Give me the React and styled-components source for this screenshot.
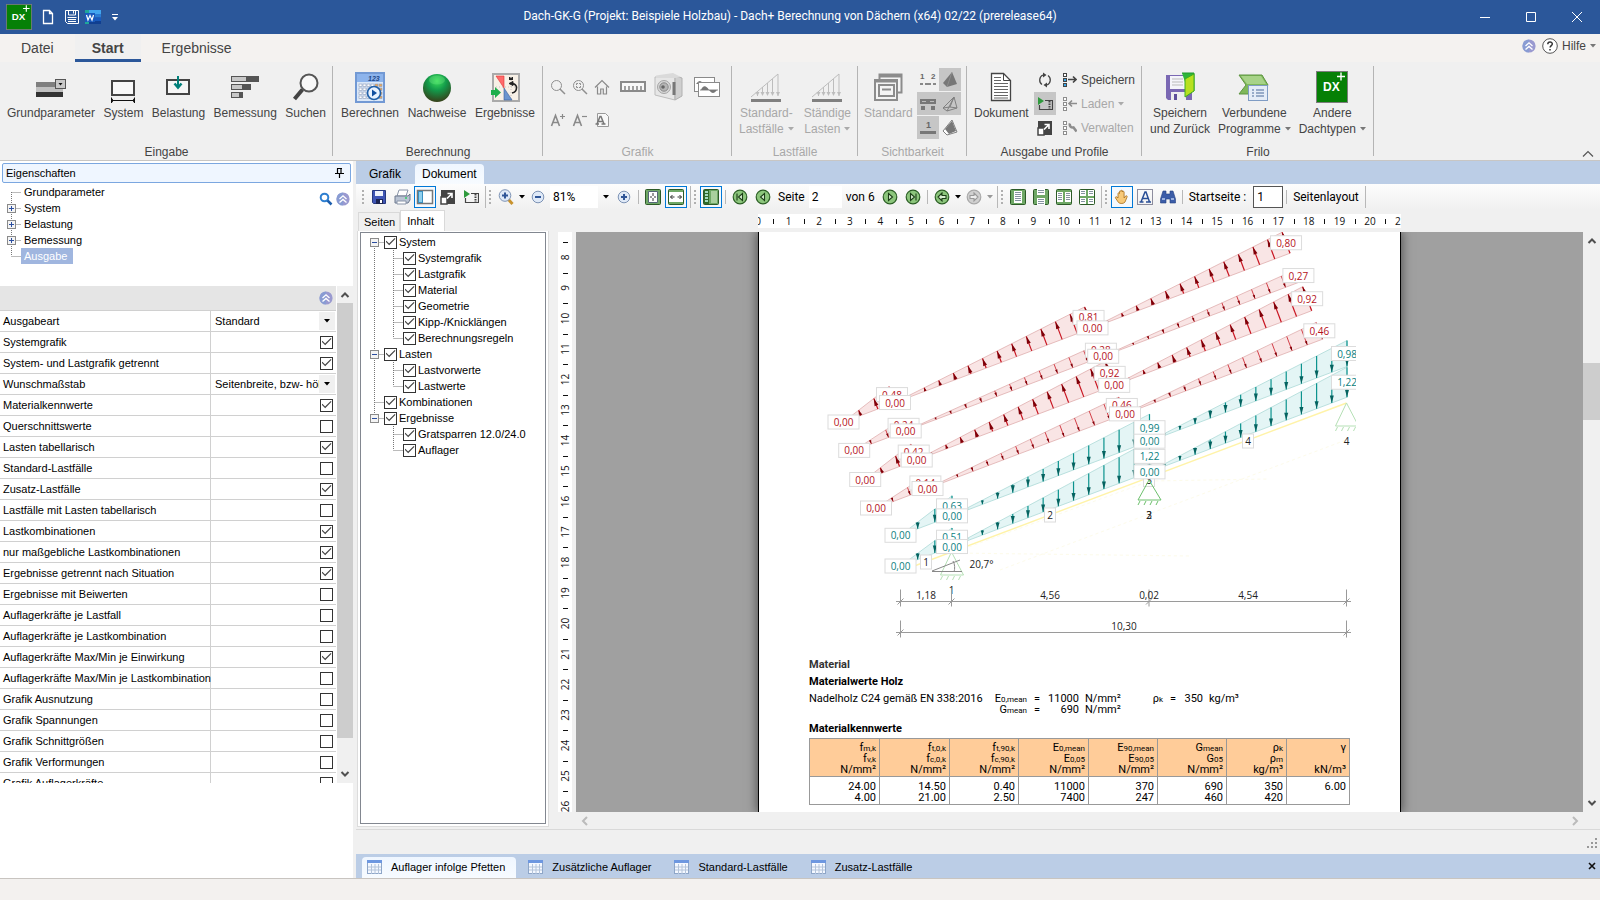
import React from 'react';
import styled, { createGlobalStyle, css } from 'styled-components';

const SANS = '"Liberation Sans", Arial, sans-serif';
const UI = 'Roboto, "Segoe UI", sans-serif';
const DOC = 'Roboto, sans-serif';
const PLOT = '"Open Sans", sans-serif';

const Global = createGlobalStyle`
  *, *::before, *::after { box-sizing: border-box; }
  html, body, #root { height: 100%; margin: 0; }
  body { background: #f0f0f0; font: 11px/16px ${SANS}; color: #000; overflow: hidden; }
  button, input, select { font: inherit; color: inherit; margin: 0; padding: 0; border: 0; background: none; border-radius: 0; }
  ul { list-style: none; margin: 0; padding: 0; }
  svg { display: block; flex: none; }
`;

const Window = styled.div`
  display: flex;
  flex-direction: column;
  height: 100vh;
  min-width: 1400px;
`;

/* ---------- title bar ---------- */

const TitleBar = styled.header`
  display: grid;
  grid-template-columns: 1fr auto 1fr;
  align-items: center;
  flex: none;
  height: 34px;
  background: #2b579a;
  color: #fff;
`;
const QuickAccess = styled.div`
  display: flex;
  align-items: center;
  padding-left: 6px;
`;
const QuickButton = styled.button`
  display: grid;
  place-items: center;
  width: ${(p) => p.$w || 22}px;
  height: 26px;
`;
const Title = styled.h1`
  margin: 0;
  padding: 0 20px 2px 0;
  font: 12px/16px ${UI};
`;
const WindowButtons = styled.div`
  display: flex;
  justify-content: flex-end;
`;
const WindowButton = styled.button`
  display: grid;
  place-items: center;
  width: 46px;
  height: 34px;
`;

/* ---------- ribbon ---------- */

const TabRow = styled.nav`
  display: flex;
  align-items: stretch;
  flex: none;
  height: 28px;
  background: #f4f2f0;
`;
const RibbonTab = styled.button`
  padding: 3px ${(p) => (p.$active ? 17 : 21)}px 0;
  font: ${(p) => (p.$active ? 'bold ' : '')}14px/20px ${SANS};
  color: #444;
  border-bottom: 3px solid ${(p) => (p.$active ? '#2b579a' : 'transparent')};
  background: ${(p) => (p.$active ? '#f0f0f0' : 'none')};
`;
const Help = styled.div`
  display: flex;
  align-items: center;
  gap: 6px;
  margin-left: auto;
  padding: 0 4px 4px 0;
  font-size: 12px;
  color: #444;
`;
const PlainButton = styled.button`
  display: flex;
  align-items: center;
  gap: 4px;
`;
const Ribbon = styled.div`
  display: flex;
  flex: none;
  height: 99px;
  border-bottom: 1px solid #c8c6c4;
  background: #f0f0f0;
`;
const Group = styled.section`
  display: flex;
  flex-direction: column;
  position: relative;
  width: ${(p) => p.$w}px;
  padding: 6px ${(p) => p.$pad || 7}px 0;
  color: ${(p) => (p.$off ? '#a8a8a8' : '#444')};
  font: 12px/16px ${SANS};
  &::after {
    content: '';
    position: absolute;
    right: 0;
    top: 4px;
    width: 1px;
    height: 90px;
    background: #b4b4b4;
  }
`;
const GroupBody = styled.div`
  display: flex;
  justify-content: space-between;
  height: 76px;
`;
const GroupTitle = styled.h2`
  margin: 0;
  font: inherit;
  text-align: center;
`;
const BigButton = styled.button`
  display: flex;
  flex-direction: column;
  align-items: center;
  padding-top: 3px;
  white-space: nowrap;
  span { display: flex; align-items: center; gap: 4px; }
  span:first-of-type { margin-top: 2px; }
`;
const IconRows = styled.div`
  display: flex;
  flex-direction: column;
`;
const IconLine = styled.div`
  display: flex;
  align-items: center;
  height: ${(p) => p.$h}px;
`;
const SmallButton = styled.button`
  display: grid;
  place-items: center;
  width: ${(p) => p.$w || 22}px;
  height: ${(p) => p.$h || 23}px;
  background: ${(p) => (p.$on ? '#c6c6c6' : 'none')};
`;
const SmallGrid = styled.div`
  display: grid;
  grid-template-columns: repeat(${(p) => p.$cols}, 22px);
  grid-auto-rows: 23px;
  row-gap: 1px;
`;
const TextButtons = styled.div`
  display: flex;
  flex-direction: column;
  gap: 1px;
`;
const TextButton = styled.button`
  display: flex;
  align-items: center;
  gap: 4px;
  height: 23px;
  color: ${(p) => (p.disabled ? '#a8a8a8' : '#444')};
`;
const Collapse = styled.button`
  align-self: flex-end;
  margin: 0 6px 2px auto;
`;

/* ---------- left panel ---------- */

const Body = styled.div`
  display: flex;
  flex: 1;
  min-height: 0;
`;
const Left = styled.aside`
  display: flex;
  flex-direction: column;
  flex: none;
  width: 353px;
  background: #fff;
`;
const PanelHead = styled.div`
  display: flex;
  align-items: center;
  justify-content: space-between;
  flex: none;
  height: 20px;
  margin: 2px 2px 1px;
  padding: 0 6px 0 3px;
  border: 1px solid #7ba7e0;
  border-radius: 2px;
  background: #eff6ff;
`;
const LeftTree = styled.div`
  display: flex;
  justify-content: space-between;
  flex: none;
  height: 102px;
  padding: 0 3px 0 2px;
`;
const TreeTools = styled.div`
  display: flex;
  gap: 3px;
  padding-top: 6px;
  height: 24px;
`;
const TreeRow = styled.li`
  display: flex;
  align-items: center;
  height: 16px;
`;
const TreeText = styled.span`
  padding: 0 ${(p) => (p.$sel ? 6 : 3)}px 0 3px;
  color: ${(p) => (p.$sel ? '#fff' : '#000')};
  background: ${(p) => (p.$sel ? '#a0b6df' : 'none')};
`;
const TreeLabel = styled.label`
  display: flex;
  align-items: center;
  gap: 2px;
`;
const Scroller = styled.div`
  display: flex;
  flex: none;
  height: 497px;
  overflow: hidden;
`;
const Grid = styled.div`
  width: 336px;
  overflow: hidden;
`;
const GridHead = styled.div`
  display: flex;
  justify-content: flex-end;
  align-items: center;
  height: 25px;
  padding-right: 3px;
  background: #e5e5e5;
  border-bottom: 1px solid #d0d0d0;
`;
const PropRow = styled.div`
  display: grid;
  grid-template-columns: 211px 1fr;
  height: 21px;
  border-bottom: 1px solid #d0d0d0;
`;
const PropLabel = styled.label`
  padding: 2px 0 0 3px;
  border-right: 1px solid #d0d0d0;
  white-space: nowrap;
`;
const PropCell = styled.div`
  display: flex;
  align-items: center;
  justify-content: flex-end;
  padding-right: 3px;
`;
const Check = styled.input.attrs({ type: 'checkbox' })`
  appearance: none;
  display: grid;
  place-items: center;
  width: 13px;
  height: 13px;
  border: 1px solid #333;
  background: #fff;
  &:checked::before {
    content: '';
    width: 10px;
    height: 8px;
    background: #444;
    clip-path: polygon(0 45%, 8% 35%, 36% 70%, 92% 0, 100% 10%, 37% 90%);
  }
`;
const SelectWrap = styled.div`
  display: flex;
  flex: 1;
  align-items: center;
  min-width: 0;
  padding-left: ${(p) => p.$pad}px;
`;
const Select = styled.select`
  appearance: none;
  flex: 1;
  width: 0;
  overflow: hidden;
  white-space: nowrap;
`;
const DropZone = styled.span`
  display: grid;
  place-items: center;
  width: 16px;
  height: 18px;
  margin-right: -2px;
  background: #f0f0f0;
`;
const ScrollBar = styled.div`
  display: flex;
  flex-direction: ${(p) => (p.$h ? 'row' : 'column')};
  align-items: center;
  justify-content: space-between;
  flex: none;
  ${(p) => (p.$h ? css`height: 17px;` : css`width: 16px;`)}
  background: #f0f0f0;
`;
const PropScroll = styled(ScrollBar)`
  margin-left: 1px;
  padding: 4px 0;
`;
const ScrollTrack = styled.div`
  flex: 1;
  width: 100%;
  padding-top: ${(p) => p.$from}px;
`;
const ScrollThumb = styled.div`
  height: ${(p) => p.$size}px;
  background: #cdcdcd;
`;

/* ---------- work area ---------- */

const Work = styled.main`
  display: flex;
  flex-direction: column;
  flex: 1;
  min-width: 0;
  margin-left: 3px;
`;
const TabStrip = styled.nav`
  display: flex;
  align-items: flex-end;
  flex: none;
  height: ${(p) => p.$h}px;
  padding-left: 6px;
  background: #bbcde6;
`;
const DocTab = styled.button`
  display: flex;
  align-items: center;
  gap: 9px;
  height: ${(p) => p.$h || 20}px;
  padding: 0 ${(p) => (p.$icon ? 11 : 7)}px ${(p) => (p.$icon ? 2 : 0)}px ${(p) => (p.$icon ? 5 : 7)}px;
  margin-right: 7px;
  font: ${(p) => (p.$icon ? 11 : 12)}px/16px ${SANS};
  border-radius: 4px 4px 0 0;
  background: ${(p) => (p.$active ? 'linear-gradient(#eff6ff, #f7fbff)' : 'none')};
`;
const CloseTab = styled.button`
  margin: 0 4px 8px auto;
`;
const ToolBar = styled.div`
  display: flex;
  align-items: center;
  gap: 1px;
  flex: none;
  height: 26px;
  padding-left: 6px;
  font: 12px/16px ${UI};
  background: linear-gradient(#fdfdfd, #f0f0f0);
`;
const Tool = styled.button`
  display: grid;
  place-items: center;
  width: 22px;
  height: 22px;
  border: 1px solid ${(p) => (p.$on ? '#0078d7' : 'transparent')};
  background: ${(p) => (p.$on ? '#f5f9fd' : 'none')};
`;
const DropTool = styled.button`
  display: grid;
  place-items: center;
  width: 8px;
  height: 22px;
`;
const Sep = styled.i`
  width: 1px;
  height: ${(p) => (p.$end ? 22 : 14)}px;
  margin: 0 2px;
  background: #b8b8b8;
`;
const Grip = styled.i`
  width: 2px;
  height: 14px;
  margin-right: 3px;
  background: repeating-linear-gradient(#b0b0b0 0 2px, transparent 2px 4px);
`;
const ToolText = styled.span`
  padding: 0 3px;
  white-space: nowrap;
`;
const ToolInput = styled.input`
  width: ${(p) => (p.$box ? 30 : 33)}px;
  height: 22px;
  padding-left: 3px;
  background: #fff;
  border: ${(p) => (p.$box ? '1px solid #555' : '0')};
`;
const ZoomWrap = styled.div`
  display: flex;
  align-items: center;
  width: 62px;
  select { width: 48px; height: 22px; padding-left: 3px; background: #fff; appearance: none; }
  svg { margin-left: 5px; }
`;
const Middle = styled.div`
  display: flex;
  flex: 1;
  min-height: 0;
`;
const Side = styled.div`
  display: flex;
  flex-direction: column;
  flex: none;
  width: 193px;
`;
const SideTabs = styled.div`
  display: flex;
  align-items: flex-end;
  height: 21px;
  padding-left: 2px;
`;
const SideTab = styled.button`
  height: ${(p) => (p.$active ? 21 : 19)}px;
  padding: 0 ${(p) => (p.$active ? 10 : 4)}px 0 ${(p) => (p.$active ? 6 : 5)}px;
  border: 1px solid #d9d9d9;
  border-bottom: 0;
  background: ${(p) => (p.$active ? '#fff' : '#f0f0f0')};
`;
const SidePane = styled.div`
  display: flex;
  flex: 1;
  margin: 0 0 2px 1px;
  padding: 1px 2px 2px;
  border: 1px solid #dcdcdc;
  border-top: 0;
  background: #fff;
`;
const TreeBox = styled.ul`
  flex: 1;
  padding: 1px 0 0 4px;
  border: 1px solid #828790;
`;
const View = styled.div`
  display: grid;
  grid-template-columns: 14px 1fr 17px;
  grid-template-rows: 14px 1fr 17px;
  flex: 1;
  min-width: 0;
  padding: 4px 0 0 9px;
`;
const TopRuler = styled.div`
  grid-column: 2;
  margin-left: 4px;
  display: flex;
  justify-content: center;
`;
const SideRuler = styled.div`
  grid-column: 1;
  grid-row: 2;
  margin-top: 4px;
  background: #fff;
  overflow: hidden;
`;
const Canvas = styled.div`
  grid-column: 2;
  grid-row: 2;
  display: flex;
  justify-content: center;
  margin: 4px 0 0 4px;
  min-height: 0;
  overflow: hidden;
  background: #a0a0a0;
`;
const Page = styled.article`
  width: 643px;
  padding: 0 50px;
  border: 1px solid #000;
  border-width: 0 1px;
  background: #fff;
  box-shadow: 0 0 10px 1px rgba(0, 0, 0, 0.5);
  font: 11px/11px ${DOC};
`;
const DocTitle = styled.h3`
  margin: ${(p) => p.$top || 0}px 0 0;
  font: bold 11px/${(p) => p.$lh || 16}px ${DOC};
  color: ${(p) => p.$c || '#000'};
`;
const Formulas = styled.div`
  display: grid;
  grid-template-columns: 178px 40px 20px 32px 68px 16px 20px 20px auto;
  margin-top: 2px;
  text-align: right;
  white-space: nowrap;
  span:first-child { text-align: left; }
`;
const Eq = styled.span`
  text-align: center;
`;
const Unit = styled.span`
  padding-left: 6px;
  text-align: left;
`;
const Sub = styled.small`
  font-size: 8px;
  line-height: 8px;
`;
const DocTable = styled.table`
  width: 540px;
  margin-top: 1px;
  table-layout: fixed;
  border-collapse: collapse;
  text-align: right;
  th, td { font-weight: normal; border: 1px solid #999; vertical-align: top; }
  th { background: #ffcc99; padding: 3px 3px 1px; }
  td { padding: 4px 3px 1px; }
  div { height: 11px; }
`;
const HScroll = styled(ScrollBar)`
  grid-column: 2 / 4;
  grid-row: 3;
  padding: 0 20px 0 8px;
`;
const VScroll = styled(ScrollBar)`
  grid-column: 3;
  grid-row: 2;
  width: 17px;
  margin-top: 4px;
  padding: 4px 0;
`;
const Lower = styled.div`
  display: flex;
  justify-content: flex-end;
  align-items: flex-end;
  flex: none;
  height: 25px;
  padding: 0 3px 6px;
  border-top: 1px solid #d9d9d9;
`;
const Status = styled.footer`
  flex: none;
  height: 22px;
  border-top: 1px solid #c8c4c0;
  background: #f3f1ef;
`;

/* ---------- icons ---------- */

const Svg = ({ w = 16, h = w, children, ...p }) => (
  <svg width={w} height={h} viewBox={`0 0 ${w} ${h}`} fill="none" aria-hidden="true" {...p}>{children}</svg>
);
const Arrow = ({ c = '#777' }) => <Svg w={6} h={4}><path d="M0 0h6L3 3.500z" fill={c} /></Svg>;
const Orb = () => (
  <Svg w={14}>
    <circle cx="7" cy="7" r="6.600" fill="#9a9ad0" />
    <path d="M7 .4A6.6 6.6 0 0 0 7 13.6z" fill="#7f9fd6" opacity=".6" />
    <path d="M3.500 7 7 3.800 10.500 7M3.500 10.600 7 7.400 10.500 10.600" stroke="#fff" strokeWidth="1.300" />
  </Svg>
);
const Dx = ({ s = 26 }) => (
  <svg width={s} height={s} viewBox="0 0 32 32" fill="none" aria-hidden="true">
    <rect x=".5" y=".5" width="31" height="31" fill="#068006" stroke="#7d7d7d" />
    <text x="7" y="20" fontFamily="Liberation Sans" fontSize="12" fontWeight="bold" fill="#fff">DX</text>
    <path d="M21 5.500h8M25 1.500v8" stroke="#fff" strokeWidth="1.400" />
  </svg>
);
const GrundIcon = () => (
  <Svg w={32}>
    <path d="M1 11h27v5H1z" fill="#7f7f7f" /><path d="M1 16h27v5H1z" fill="#c0c0c0" /><path d="M1 21h27v5H1z" fill="#333" />
    <rect x="20.500" y="8.500" width="10" height="9" fill="#c8c8c8" stroke="#555" /><path d="M23.500 12h4l-2 2.500z" fill="#111" />
  </Svg>
);
const SystemIcon = () => (
  <Svg w={32}>
    <rect x="5" y="10" width="22" height="14" fill="#f8f8f8" stroke="#444" strokeWidth="2" />
    <path d="M4 29.500h24M4.500 26.500v6M27.500 26.500v6M4 29.500l2-1.500M4 29.500l2 1.500M28 29.500l-2-1.500M28 29.500l-2 1.500" stroke="#111" />
  </Svg>
);
const LoadIcon = () => (
  <Svg w={32}>
    <rect x="5" y="9" width="22" height="14" fill="#f6f6f6" stroke="#444" strokeWidth="2" />
    <path d="M16 5v10" stroke="#00807a" strokeWidth="2" /><path d="m12.500 12.500 3.500 4 3.500-4" stroke="#00807a" strokeWidth="2.500" />
  </Svg>
);
const BarsIcon = () => (
  <Svg w={32}>
    {[[5, 28, 14], [13, 20, 10], [21, 12, 7]].map(([y, w, l]) => (
      <g key={y}><rect x="2" y={y} width={w} height="6" fill="#555" /><rect x="3" y={y + 1} width={l} height="4" fill="#c8c8c8" /></g>
    ))}
  </Svg>
);
const SearchIcon = () => (
  <Svg w={32}>
    <circle cx="19" cy="12" r="8.500" stroke="#555" strokeWidth="2" fill="#f8f8f8" /><path d="M12.500 18.500 4.500 28" stroke="#444" strokeWidth="4" />
  </Svg>
);
const CalcIcon = () => (
  <Svg w={32}>
    <rect x="2" y="2" width="28" height="29" fill="#dbe8f8" stroke="#7299d4" strokeWidth="2" />
    <rect x="3" y="3" width="26" height="8" fill="#8db4ec" />
    <text x="14" y="10" fontFamily="Liberation Sans" fontStyle="italic" fontWeight="bold" fontSize="7" fill="#234a8a">123</text>
    {[0, 1, 2, 3, 4, 5].map((i) => [0, 1, 2, 3].map((j) => (
      <rect key={`${i}${j}`} x={5 + i * 4} y={13 + j * 4} width="3" height="2.500" fill={i > 3 ? '#eaa75a' : '#fff'} stroke="#8a9ab8" strokeWidth=".6" />
    )))}
    <circle cx="20" cy="22" r="6.500" fill="#e8f2ff" stroke="#1f5fa8" strokeWidth="1.600" /><path d="M18 18.500v7l5-3.500z" fill="#114f9f" />
  </Svg>
);
const GreenBall = () => (
  <Svg w={32}>
    <defs><radialGradient id="ball" cx=".5" cy=".25" r=".75"><stop offset="0" stopColor="#3be05a" /><stop offset=".45" stopColor="#13994a" /><stop offset="1" stopColor="#36401a" /></radialGradient></defs>
    <circle cx="16" cy="17" r="14" fill="url(#ball)" />
    <ellipse cx="16" cy="9" rx="8" ry="4.500" fill="#7df08f" opacity=".3" />
  </Svg>
);
const ResultIcon = () => (
  <Svg w={32}>
    <rect x="4" y="3" width="26" height="27" fill="#f7f0e6" stroke="#aaa" strokeWidth="2" />
    <path d="M4 16h26M22 3v27" stroke="#aaa" strokeDasharray="1 2" strokeWidth=".6" />
    <path d="M7 5h8v12z" fill="#ff6b6b" stroke="#e03030" strokeWidth=".6" /><path d="M15 17v12h8z" fill="#6b95cf" stroke="#39609a" strokeWidth=".6" />
    <path d="M23 13c6-1 6 8 0 9" stroke="#222" strokeWidth="1.600" /><path d="M20 12.500l4-2v4zM20.500 9V6l1.500 2 1.500-2v3" fill="#222" stroke="#222" />
    <path d="M2 19h4v-3l6 5.500-6 5.500v-3H2z" fill="#1fae4b" />
  </Svg>
);
const Lens = ({ box }) => (
  <Svg w={16}><circle cx="6.500" cy="6.500" r="5" stroke="#8f8f8f" /><path d="m10 10 5 5" stroke="#8f8f8f" strokeWidth="1.500" />{box && <path d="M4.500 4.500h1.500M7 4.500h1.500V6M8.500 7v1.500H7M6 8.500H4.500V7M4.500 6V4.500" stroke="#8f8f8f" />}</Svg>
);
const HomeIcon = () => <Svg w={16}><path d="M1 8.500 8 1.500l7 7M3.500 7.500V15h3.200v-5h2.600v5h3.200V7.500" stroke="#8a8a8a" strokeWidth="1.200" /></Svg>;
const RulerIcon = () => <Svg w={26} h={12}><rect x="1" y="1" width="24" height="9" stroke="#8a8a8a" strokeWidth="2" fill="#f8f8f8" /><path d="M5 9V5M9 9V5M13 9V5M17 9V5M21 9V5" stroke="#8a8a8a" strokeWidth="1.600" /></Svg>;
const CameraIcon = () => (
  <Svg w={30} h={30}>
    <path d="M2 5 22 4v24L2 23z" fill="#e6e6e6" stroke="#bdbdbd" /><path d="M22 4l7 2v18l-7 4z" fill="#cfcfcf" stroke="#b0b0b0" />
    <path d="M3 3.500 20 1l8 4-6 1L3 6z" fill="#dadada" /><circle cx="11" cy="15" r="6.500" fill="#d6d6d6" stroke="#a5a5a5" /><circle cx="11" cy="15" r="4.200" fill="#b5b5b5" stroke="#8a8a8a" /><circle cx="10" cy="15" r="1.800" fill="#666" /><path d="M21 10v13" stroke="#777" strokeWidth="3" />
  </Svg>
);
const PicsIcon = () => (
  <Svg w={26} h={22}>
    <rect x=".5" y="1.500" width="20" height="14" fill="#fff" stroke="#8a8a8a" /><path d="M2 8c3-4 5-4 7 0z" fill="#777" />
    <rect x="4.500" y="6.500" width="21" height="14" fill="#fff" stroke="#8a8a8a" /><path d="M6 14h18" stroke="#888" /><path d="M7 14c2-5 5-5 8 0 3 4 5 4 8 0z" fill="#777" />
  </Svg>
);
const FontIcon = ({ sign }) => (
  <Svg w={16}><path d="M1.500 14 5.500 3.500 9.500 14M3 10.500h5.500" stroke="#8a8a8a" strokeWidth="1.600" /><path d={sign ? 'M10 4.500h5M12.500 2v5' : 'M10 4.500h5'} stroke="#8a8a8a" strokeWidth="1.200" /></Svg>
);
const FontDoc = () => (
  <Svg w={16}><path d="M3.500 1.500h8l3 3v10h-11z" fill="#f8f8f8" stroke="#999" /><path d="M1.500 12h3.500M7.500 12h4M3 12 6 4.500h1L10 12M4.500 9.500h4" stroke="#777" strokeWidth="1.500" /></Svg>
);
const TriLoad = () => (
  <Svg w={32}>
    <path d="M1 26 28 3M28 3v22M22.500 8v16M17.500 12v12M12.500 16v8M7.500 21v4" stroke="#bdbdbd" />
    <path d="M20.500 21h4l-2 4zM26 21h4l-2 4zM15.500 21h4l-2 4zM10.500 21h4l-2 4zM5.500 21h4l-2 4z" fill="#bdbdbd" />
    <path d="M1 29.500h30" stroke="#808080" strokeWidth="3" />
  </Svg>
);
const StandIcon = () => (
  <Svg w={32}>
    <rect x="7.500" y="3.500" width="22" height="18" stroke="#8c8c8c" strokeWidth="2" fill="#f4f4f4" /><path d="M7 5h23" stroke="#8c8c8c" strokeWidth="3" />
    <rect x="3" y="9" width="22" height="20" stroke="#8c8c8c" strokeWidth="2" fill="#f4f4f4" /><path d="M2 10h24" stroke="#8c8c8c" strokeWidth="3" />
    <rect x="7" y="14" width="15" height="11" stroke="#8c8c8c" strokeWidth="2" fill="#f4f4f4" /><path d="M10 18.500h9" stroke="#8c8c8c" strokeWidth="2" />
  </Svg>
);
const Vis = ({ k }) => (
  <Svg w={18}>
    {k === 'nodes' && <><text x="1" y="8" fontFamily="Liberation Sans" fontWeight="bold" fontSize="8" fill="#666">1</text><text x="12" y="8" fontFamily="Liberation Sans" fontWeight="bold" fontSize="8" fill="#666">2</text><path d="M1 13h3M6 13h6M14 13h3" stroke="#888" strokeWidth="2" /></>}
    {k === 'solid' && <><path d="m11 1 5 12-10 3-4-4z" fill="#777" /><path d="m11 1-5 15" stroke="#999" strokeWidth=".6" /></>}
    {k === 'beam' && <><path d="M1 4h16v5H1z" fill="#777" /><path d="M2 11h4v4H2zM12 11h4v4h-4z" fill="#777" /><path d="M3 6.500h4M11 6.500h4" stroke="#bbb" /></>}
    {k === 'wire' && <path d="M13 2 2 13l4 3 10-3zM13 2 6 16M13 2l-4 10M2 13l7-1 7 1" stroke="#808080" />}
    {k === 'one' && <><text x="7" y="9" fontFamily="Liberation Sans" fontWeight="bold" fontSize="9" fill="#666">1</text><path d="M1 13.500h16" stroke="#777" strokeWidth="3" /></>}
    {k === 'half' && <><path d="M11 1 2 12l4 4 10-3z" stroke="#808080" fill="#fff" /><path d="m11 2-7 8 4 5 7-3z" fill="#777" /></>}
  </Svg>
);
const DocIcon = () => (
  <Svg w={32}>
    <path d="M6.500 2.500h12l7 7v20h-19z" fill="#fff" stroke="#444" strokeWidth="1.300" /><path d="M18.500 2.500v7h7" stroke="#444" />
    <path d="M9 6.500h7M9 9.500h7M9 12.500h14M9 15.500h14M9 18.500h14M9 21.500h14M9 24.500h14M9 27h14" stroke="#666" />
  </Svg>
);
const Refresh = () => <Svg w={16}><path d="M6 3A5.500 5.500 0 0 0 5 12.500M10 13A5.500 5.500 0 0 0 11 3.500" stroke="#444" strokeWidth="1.300" /><path d="M6 .500v5l3.500-2.500zM10 15.500v-5L6.500 13z" fill="#444" /></Svg>;
const PlayFilm = () => <Svg w={16}><path d="M1 1v8l6-4z" fill="#2e9a3c" /><path d="M8 4.500h7.500v9h-13V9" stroke="#444" strokeWidth="1.200" /><path d="M12.500 5v8" stroke="#444" strokeWidth="2" strokeDasharray="1.500 1" /></Svg>;
const Expand = () => <Svg w={16}><rect x="1" y="1" width="14" height="14" fill="#444" /><path d="M1 8h6v7H1z" fill="#fff" stroke="#444" strokeWidth="1.500" /><path d="M7 9.500 11.500 5M7.500 4.500h4.500V9" stroke="#fff" strokeWidth="1.600" /></Svg>;
const Profile = ({ k }) => {
  const c = k === 'save' ? '#444' : '#8d8d8d';
  return (
    <Svg w={15} h={16}>
      {[1, 6, 11].map((y, i) => <rect key={y} x="1.500" y={y + 0.5} width="3" height="3" fill={k === 'save' && i ? '#3aa7e8' : '#fff'} stroke={c} />)}
      {k === 'save' && <path d="M6 7.500h8M11 4.500l3 3-3 3" stroke={c} strokeWidth="1.600" />}
      {k === 'load' && <path d="M7 7.500h8M10 4.500l-3 3 3 3" stroke={c} strokeWidth="1.600" />}
      {k === 'edit' && <path d="M8 3.500a3 3 0 0 0 3.500 4l3 4" stroke={c} strokeWidth="2.500" />}
    </Svg>
  );
};
const SaveBack = () => (
  <Svg w={32}>
    <path d="M2 4h26v25H4l-2-2z" fill="#7a68b3" /><path d="M6 5h15v13H6z" fill="#f4f4fa" /><path d="M8 8h11M8 11h11M8 14h11" stroke="#bbb" />
    <path d="M7 21h15v8H7z" fill="#eee" /><path d="M10 23h3v6h-3z" fill="#5f4f9a" />
    <path d="M18 2h12v18h-6" fill="#2eb53a" stroke="#1f9a2a" /><path d="m30 3-9 5v18l9-6z" fill="#b8e020" stroke="#3fae1e" />
  </Svg>
);
const Linked = () => (
  <Svg w={32}>
    <path d="M1 4h23l6 10-6 9H1l7-9z" fill="#7fb85a" stroke="#5d9440" /><path d="M3 5h20l5 8H9z" fill="#a7d388" />
    <rect x="10.500" y="14.500" width="19" height="15" fill="#e4ecf7" stroke="#7f9cc4" /><path d="M14 19h2M14 22h2M14 25h2M18 19h8M18 22h8M18 25h8" stroke="#4a6a9a" />
  </Svg>
);
const Floppy = ({ c = '#3f55b5' }) => (
  <Svg w={16}>
    <path d="M1.500 1.500h13v13h-12l-1-1z" fill={c} stroke="#27397f" /><path d="M4 2h8v5H4z" fill="#eef2fb" /><path d="M5 10h7v5H5z" fill="#1c2552" /><path d="M9 11h2v3H9z" fill="#fff" />
  </Svg>
);
const Printer = () => <Svg w={17} h={16}><path d="M5 1h9l-2 6H3z" fill="#fff" stroke="#8a95a8" /><path d="M1 7h13l2-2v6l-2 3H1z" fill="#b9c3d3" stroke="#6c788d" /><path d="M3 12h9v3H3z" fill="#fff" stroke="#8a95a8" /><path d="M11 9h2" stroke="#3c6" strokeWidth="1.500" /></Svg>;
const PanelIcon = () => <Svg w={18} h={16}><rect x="1.500" y="1.500" width="15" height="13" fill="#fff" stroke="#777" strokeWidth="1.500" /><rect x="2.500" y="2.500" width="4" height="11" fill="#8fd0ee" stroke="#3a8fbf" /></Svg>;
const Zoomer = ({ sign, pen }) => (
  <Svg w={16}>
    {pen && <path d="m10 10 4.500 5" stroke="#c8922e" strokeWidth="3" />}
    <circle cx={pen ? 7 : 8} cy={pen ? 6.5 : 8} r="5.800" fill="#dfe9f7" stroke="#7d93b5" />
    <path d={`${pen ? 'M4 6.500h6' : 'M5 8h6'}${sign ? (pen ? 'M7 3.500v6' : 'M8 5v6') : ''}`} stroke="#2f5597" strokeWidth="2" />
  </Svg>
);
const GreenBox = ({ children }) => <Svg w={16}><rect x=".5" y=".5" width="15" height="15" rx="1" fill="#6fa866" stroke="#2c5a27" />{children}</Svg>;
const FitPage = () => <GreenBox><path d="M3.500 2.500h9v11h-9z" fill="#fff" stroke="#567" /><path d="M8 4v3M8 9v3M5 8h2M9 8h2" stroke="#333" /></GreenBox>;
const FitWidth = () => <GreenBox><path d="M1 3h14v10H1z" fill="#fff" /><path d="M2.500 8h4M9.500 8h4M4.500 6l-2 2 2 2M11.500 6l2 2-2 2" stroke="#333" /></GreenBox>;
const Thumbs = () => <GreenBox><path d="M1 1h5v14H1z" fill="#2f6a2a" /><path d="M2 3h3M2 6h3M2 9h3M2 12h3" stroke="#cfe" strokeWidth="1.500" /><path d="M8 2h6v12H8z" fill="#a9d09e" /></GreenBox>;
const Pages = ({ k }) => (
  <GreenBox>
    {(k === 1 ? [[4, 2, 8, 12]] : k === 2 ? [[4, 0, 8, 6], [4, 9, 8, 7]] : k === 3 ? [[1, 3, 6, 10], [9, 3, 6, 10]] : [[1, 1, 6, 6], [9, 1, 6, 6], [1, 9, 6, 6], [9, 9, 6, 6]]).map(([x, y, w, h]) => (
      <g key={`${x}-${y}`}><rect x={x} y={y} width={w} height={h} fill="#fff" />{Array.from({ length: Math.floor((h - 1) / 2) }, (_, i) => <path key={i} d={`M${x + 1} ${y + 1.5 + i * 2}h${w - 2}`} stroke="#678" strokeWidth=".8" />)}</g>
    ))}
  </GreenBox>
);
const NavBall = ({ d, off }) => (
  <Svg w={16}>
    <circle cx="8" cy="8" r="6.800" fill={off ? '#d0d0d0' : '#8cc67c'} stroke={off ? '#a8a8a8' : '#2c5f25'} strokeWidth="1.200" />
    <path d={d} fill={off ? '#eee' : '#d9f0d2'} stroke={off ? '#999' : '#1d3f18'} strokeWidth="1.100" />
  </Svg>
);
const Hand = () => <Svg w={16}><path d="M4 9V4.500c0-1 1.500-1 1.500 0V2.500c0-1 1.500-1 1.500 0v-.500c0-1 1.500-1 1.500 0v1c0-1 1.600-1 1.600 0V9l1.500-2c1-.800 2 .200 1.400 1.200L11 13c-1 1.800-5 2-6.500.500L1.500 9c-.500-1 .700-1.700 1.400-1z" fill="#f7c978" stroke="#a86f1d" strokeWidth=".8" /></Svg>;
const SelText = () => <Svg w={16}><rect x=".5" y=".5" width="15" height="15" stroke="#224" strokeDasharray="1 1" /><path d="M2.500 13h4M9 13h5M4 13l4-10h1l3.500 10M5.500 9.500h5" stroke="#2a4f96" strokeWidth="1.500" /></Svg>;
const Bino = () => <Svg w={16}><path d="M3 2h3v3h4V2h3l2.500 8v4H10v-4H6v4H.500v-4z" fill="#3c5da8" stroke="#24407f" strokeWidth=".6" /><path d="M2 10h3M11 10h3" stroke="#b9cdf2" strokeWidth="1.500" /></Svg>;
const Sheet = () => (
  <Svg w={15} h={14}><rect x=".5" y=".5" width="14" height="13" fill="#f4f8ff" stroke="#8ea6c8" /><path d="M0 0h15v3H0z" fill="#6d97e0" /><path d="M1 7h13M1 10h13M4.500 4v10M8 4v10M11.500 4v10" stroke="#b4c4da" /></Svg>
);
const Chevron = ({ d, c = '#505050' }) => <Svg w={10}><path d={d} stroke={c} strokeWidth="2" /></Svg>;
const UP = 'M1.500 7l3.500-3.500 3.500 3.500';
const DOWN = 'M1.500 3l3.500 3.500 3.500-3.500';

/* One 16px-high tree cell with its dotted connectors and, where needed, the expander. */
const Guide = ({ w = 19, up, down, right, box }) => {
  const m = 9.5;
  return (
    <Svg w={w} h={16}>
      <path d={`${up ? `M${m} 0V8` : ''}${down ? `M${m} 8V16` : ''}${right ? `M${m} 8.500H${w}` : ''}`} stroke="#777" strokeDasharray="1 1" />
      {box && <><rect x="5.500" y="4.500" width="8" height="8" fill="#f4f4f4" stroke="#8a8a8a" /><path d={box === '+' ? 'M7 8.500h5M9.500 6v5' : 'M7 8.500h5'} stroke="#2b4ea0" /></>}
    </Svg>
  );
};

/* ---------- load diagram ---------- */

const RED = { fill: '#f9e5e5', line: '#dba5a5', arrow: '#c81420', head: '#800008', text: '#b5121b' };
const TEAL = { fill: '#e4f5f5', line: '#a3d5d3', arrow: '#0b938e', head: '#056360', text: '#0b8080' };
const SLOPE = 0.378;
const SPANS = [0, 51.5, 249, 446.5];
const LOADS = [
  { x: 843.5, y: 422, len: [17, 22.4, 22.4], val: ['0,48', '0,81', '0,80'], up: true },
  { x: 854.2, y: 450.4, len: [12, 13, 13], val: ['0,24', '0,28', '0,27'] },
  { x: 865.2, y: 479.5, len: [17, 25.7, 25.7], val: ['0,42', '0,92', '0,92'], up: true },
  { x: 876, y: 508, len: [12, 18, 18], val: ['0,14', '0,46', '0,46'] },
  { x: 900.5, y: 535.3, len: [20, 27, 26], val: ['0,63', '0,99', '0,98'], teal: true },
  { x: 900.5, y: 566, len: [18.6, 31, 30], val: ['0,51', '1,22', '1,22'], teal: true },
];

const direction = (teal) => (teal ? [0, -1] : [-0.353, -0.935]);

const Tag = ({ x, y, c = '#222', w = 31, h = 14, children }) => (
  <g>
    <rect x={x - w / 2} y={y - h / 2} width={w} height={h} fill="#fff" stroke="#dcdcdc" />
    <text x={x} y={y + 4} fill={c} textAnchor="middle">{children}</text>
  </g>
);

function LoadArea({ x, y, len, up, teal }) {
  const c = teal ? TEAL : RED;
  const [ux, uy] = direction(teal);
  const at = (s) => [x + s, y - s * SLOPE];
  return len.map((L, i) => {
    const [a, b] = [SPANS[i], SPANS[i + 1]];
    const [ax, ay] = at(a);
    const [bx, by] = at(b);
    const n = i === 0 ? 3 : 13;
    return (
      <g key={i}>
        <path d={`M${ax} ${ay}L${bx + ux * L} ${by + uy * L}L${bx} ${by}z`} fill={c.fill} stroke={c.line} strokeWidth=".7" />
        {Array.from({ length: n }, (_, k) => {
          const t = (k + 1) / n;
          const [sx, sy] = at(a + (b - a) * t);
          const l = L * t;
          const small = !up && !teal;
          const hl = Math.min(l * 0.95, small ? 4 : 7.5);
          const hw = Math.min(small ? 1.2 : 2, 0.7 + l * 0.2);
          const [hx, hy, dir] = up ? [sx + ux * l, sy + uy * l, -1] : [sx, sy, 1];
          const ex = hx + ux * hl * dir;
          const ey = hy + uy * hl * dir;
          return (
            <g key={k}>
              <path d={`M${sx} ${sy}L${sx + ux * l} ${sy + uy * l}`} stroke={c.arrow} strokeWidth={small ? 0.8 : 1.2} />
              <path d={`M${hx} ${hy}L${ex - uy * hw} ${ey + ux * hw}L${ex + uy * hw} ${ey - ux * hw}z`} fill={c.head} />
            </g>
          );
        })}
      </g>
    );
  });
}

function LoadTags({ x, y, len, val, teal }) {
  const c = (teal ? TEAL : RED).text;
  const [ux, uy] = direction(teal);
  return (
    <g>
      {val.map((v, i) => (
        <Tag key={i} x={x + SPANS[i + 1] + (ux * len[i]) / 2} y={y - SPANS[i + 1] * SLOPE + (uy * len[i]) / 2} c={c}>{v}</Tag>
      ))}
      {val.map((v, i) => <Tag key={`z${i}`} x={x + SPANS[i]} y={y - SPANS[i] * SLOPE} c={c}>0,00</Tag>)}
    </g>
  );
}

const Support = ({ x, y, h = 23, c }) => (
  <g stroke={c} fill="none">
    <path d={`M${x} ${y}l-11 ${h}h23z`} />
    <path d={[-9, -3, 3, 9].map((d) => `M${x + d} ${y + h + 1}l-2 4`).join('')} />
  </g>
);
const Dimension = ({ y, ticks, labels }) => (
  <g>
    <path d={`M896 ${y}H1351${ticks.map((t) => `M${t} ${y - 12}v17M${t - 3} ${y + 3}l6-6`).join('')}`} stroke="#9a9a9a" />
    {labels.map(([x, t]) => <text key={t} x={x} y={y - 3} textAnchor="middle" fill="#222">{t}</text>)}
  </g>
);

const Diagram = () => (
  <svg width="547" height="424" viewBox="809 232 547 424" fill="none" fontFamily={PLOT} fontSize="10" role="img" aria-label="Lastgrafik">
    <path d="M901 571 1346.500 403" stroke="#fff3a8" strokeWidth="1.400" />
    <path d="M952 553 1190 556M952 553 1150 481 1268 479M1000 570 1346 440" stroke="#fdfbea" strokeDasharray="3 3" />
    <Tag x={1149} y={480} w={11} h={13}>3</Tag>
    <Support x={951.5} y={552} c="#b5e0b5" />
    <Support x={1149} y={480} h={20} c="#6cc06c" />
    <Support x={1346.5} y={403} c="#b5e0b5" />
    {LOADS.map((l) => <LoadArea key={`${l.x}-${l.y}`} {...l} />)}
    {LOADS.map((l) => <LoadTags key={`${l.x}-${l.y}`} {...l} />)}
    <Tag x={926} y={562} w={11}>1</Tag>
    <Tag x={1050} y={515} w={11}>2</Tag>
    <Tag x={1248} y={441} w={11}>4</Tag>
    <path d="M932 571.500h30M932 571l28-11M953 561c2 3 2 8 1 11" stroke="#888" />
    <g fill="#222" textAnchor="middle">
      <text x="981.500" y="568">20,7°</text>
      <text x="951.500" y="594">1</text>
      <text x="1149" y="519">3</text>
      <text x="1149" y="519">2</text>
      <text x="1346.500" y="445">4</text>
    </g>
    <Dimension y={601.5} ticks={[900.5, 951.5, 1149, 1346.5]} labels={[[926, '1,18'], [1050, '4,56'], [1149, '0,02'], [1248, '4,54']]} />
    <Dimension y={632.5} ticks={[900.5, 1346.5]} labels={[[1124, '10,30']]} />
  </svg>
);

const CM = 30.6;
const HRuler = () => (
  <svg width="643" height="14" viewBox="0 0 643 14" fontFamily={PLOT} fontSize="10" fill="#111">
    <rect width="643" height="14" fill="#fff" />
    {Array.from({ length: 22 }, (_, i) => (
      <g key={i}><text x={i * CM} y="11" textAnchor="middle">{i}</text><rect x={Math.round((i + 0.5) * CM)} y="5" width="1" height="5" /></g>
    ))}
  </svg>
);
const VRuler = () => (
  <svg width="14" height="580" viewBox="0 0 14 580" fontFamily={PLOT} fontSize="10" fill="#111">
    {Array.from({ length: 19 }, (_, i) => {
      const y = 25.5 + i * 30.5;
      return (
        <g key={i}><rect x="5" y={Math.round(y - 15.5)} width="5" height="1" /><text transform={`translate(11 ${y}) rotate(-90)`} textAnchor="middle">{i + 8}</text></g>
      );
    })}
  </svg>
);

/* ---------- data ---------- */

const PROPS = [
  ['Ausgabeart', 'Standard'], ['Systemgrafik', true], ['System- und Lastgrafik getrennt', true],
  ['Wunschmaßstab', 'Seitenbreite, bzw- höhe'], ['Materialkennwerte', true], ['Querschnittswerte', false],
  ['Lasten tabellarisch', true], ['Standard-Lastfälle', false], ['Zusatz-Lastfälle', true],
  ['Lastfälle mit Lasten tabellarisch', false], ['Lastkombinationen', true], ['nur maßgebliche Lastkombinationen', true],
  ['Ergebnisse getrennt nach Situation', true], ['Ergebnisse mit Beiwerten', false], ['Auflagerkräfte je Lastfall', false],
  ['Auflagerkräfte je Lastkombination', false], ['Auflagerkräfte Max/Min je Einwirkung', true],
  ['Auflagerkräfte Max/Min je Lastkombination', false], ['Grafik Ausnutzung', false], ['Grafik Spannungen', false],
  ['Grafik Schnittgrößen', false], ['Grafik Verformungen', false], ['Grafik Auflagerkräfte', false],
];
const TREE = [
  ['System', ['Systemgrafik', 'Lastgrafik', 'Material', 'Geometrie', 'Kipp-/Knicklängen', 'Berechnungsregeln']],
  ['Lasten', ['Lastvorwerte', 'Lastwerte']],
  ['Kombinationen', []],
  ['Ergebnisse', ['Gratsparren 12.0/24.0', 'Auflager']],
];
const COLS = [
  [70, ['f', 'm,k'], ['f', 'v,k'], 'N/mm²', '24.00', '4.00'],
  [70, ['f', 't,0,k'], ['f', 'c,0,k'], 'N/mm²', '14.50', '21.00'],
  [69, ['f', 't,90,k'], ['f', 'c,90,k'], 'N/mm²', '0.40', '2.50'],
  [70, ['E', '0,mean'], ['E', '0,05'], 'N/mm²', '11000', '7400'],
  [69, ['E', '90,mean'], ['E', '90,05'], 'N/mm²', '370', '247'],
  [69, ['G', 'mean'], ['G', '05'], 'N/mm²', '690', '460'],
  [60, ['ρ', 'k'], ['ρ', 'm'], 'kg/m³', '350', '420'],
  [63, ['γ', ''], ['', ''], 'kN/m³', '6.00', ''],
];

const Big = ({ icon, a, b, drop, ...p }) => (
  <BigButton {...p}>{icon}<span>{a}</span>{b && <span>{b}{drop && <Arrow c={p.disabled ? '#aaa' : '#777'} />}</span>}</BigButton>
);

function RibbonBar() {
  return (
    <Ribbon>
      <Group $w={333} $pad={7}>
        <GroupBody>
          <Big icon={<GrundIcon />} a="Grundparameter" />
          <Big icon={<SystemIcon />} a="System" />
          <Big icon={<LoadIcon />} a="Belastung" />
          <Big icon={<BarsIcon />} a="Bemessung" />
          <Big icon={<SearchIcon />} a="Suchen" />
        </GroupBody>
        <GroupTitle>Eingabe</GroupTitle>
      </Group>
      <Group $w={210} $pad={8}>
        <GroupBody>
          <Big icon={<CalcIcon />} a="Berechnen" />
          <Big icon={<GreenBall />} a="Nachweise" />
          <Big icon={<ResultIcon />} a="Ergebnisse" />
        </GroupBody>
        <GroupTitle>Berechnung</GroupTitle>
      </Group>
      <Group $w={189} $pad={4} $off>
        <GroupBody>
          <IconRows>
            <IconLine $h={38}>
              <SmallButton aria-label="Lupe"><Lens /></SmallButton>
              <SmallButton aria-label="Ausschnitt"><Lens box /></SmallButton>
              <SmallButton aria-label="Gesamtansicht"><HomeIcon /></SmallButton>
              <SmallButton $w={40} aria-label="Maßlinien"><RulerIcon /></SmallButton>
              <SmallButton $w={30} $h={32} aria-label="Bildkopie"><CameraIcon /></SmallButton>
              <SmallButton $w={48} aria-label="Bilder"><PicsIcon /></SmallButton>
            </IconLine>
            <IconLine $h={28}>
              <SmallButton aria-label="Schrift größer"><FontIcon sign /></SmallButton>
              <SmallButton aria-label="Schrift kleiner"><FontIcon /></SmallButton>
              <SmallButton aria-label="Schriftart"><FontDoc /></SmallButton>
            </IconLine>
          </IconRows>
        </GroupBody>
        <GroupTitle>Grafik</GroupTitle>
      </Group>
      <Group $w={126} $off>
        <GroupBody>
          <Big icon={<TriLoad />} a="Standard-" b="Lastfälle" drop disabled />
          <Big icon={<TriLoad />} a="Ständige" b="Lasten" drop disabled />
        </GroupBody>
        <GroupTitle>Lastfälle</GroupTitle>
      </Group>
      <Group $w={109} $pad={6} $off>
        <GroupBody>
          <Big icon={<StandIcon />} a="Standard" disabled />
          <SmallGrid $cols={2}>
            <SmallButton><Vis k="nodes" /></SmallButton>
            <SmallButton $on><Vis k="solid" /></SmallButton>
            <SmallButton $on><Vis k="beam" /></SmallButton>
            <SmallButton $on><Vis k="wire" /></SmallButton>
            <SmallButton $on><Vis k="one" /></SmallButton>
            <SmallButton><Vis k="half" /></SmallButton>
          </SmallGrid>
        </GroupBody>
        <GroupTitle>Sichtbarkeit</GroupTitle>
      </Group>
      <Group $w={175}>
        <GroupBody>
          <Big icon={<DocIcon />} a="Dokument" />
          <SmallGrid $cols={1}>
            <SmallButton><Refresh /></SmallButton>
            <SmallButton $on><PlayFilm /></SmallButton>
            <SmallButton><Expand /></SmallButton>
          </SmallGrid>
          <TextButtons>
            <TextButton><Profile k="save" />Speichern</TextButton>
            <TextButton disabled><Profile k="load" />Laden <Arrow c="#aaa" /></TextButton>
            <TextButton disabled><Profile k="edit" />Verwalten</TextButton>
          </TextButtons>
        </GroupBody>
        <GroupTitle>Ausgabe und Profile</GroupTitle>
      </Group>
      <Group $w={232} $pad={8}>
        <GroupBody>
          <Big icon={<SaveBack />} a="Speichern" b="und Zurück" />
          <Big icon={<Linked />} a="Verbundene" b="Programme" drop />
          <Big icon={<Dx s={32} />} a="Andere" b="Dachtypen" drop />
        </GroupBody>
        <GroupTitle>Frilo</GroupTitle>
      </Group>
      <Collapse aria-label="Menüband reduzieren"><Svg w={12} h={8}><path d="m1 6.500 5-5 5 5" stroke="#555" strokeWidth="1.200" /></Svg></Collapse>
    </Ribbon>
  );
}

function Properties() {
  return (
    <Left>
      <PanelHead>Eigenschaften<Svg w={9} h={10}><path d="M2 .500h5M2.500 .500v5M6 .500v5M0 5.500h9M4.500 6v4" stroke="#000" strokeWidth="1.200" /></Svg></PanelHead>
      <LeftTree>
        <ul>
          <TreeRow><Guide down right /><TreeText>Grundparameter</TreeText></TreeRow>
          {['System', 'Belastung', 'Bemessung'].map((t) => <TreeRow key={t}><Guide up down right box="+" /><TreeText>{t}</TreeText></TreeRow>)}
          <TreeRow><Guide up right /><TreeText $sel>Ausgabe</TreeText></TreeRow>
        </ul>
        <TreeTools>
          <button aria-label="Suchen"><Svg w={14}><circle cx="5.500" cy="5.500" r="3.800" stroke="#2f7fd0" strokeWidth="2" /><path d="m8.500 8.500 4 4" stroke="#1d5fae" strokeWidth="2.500" /></Svg></button>
          <button aria-label="Einklappen"><Orb /></button>
        </TreeTools>
      </LeftTree>
      <Scroller>
        <Grid>
          <GridHead><Orb /></GridHead>
          {PROPS.map(([label, v], i) => (
            <PropRow key={label}>
              <PropLabel htmlFor={`p${i}`}>{label}</PropLabel>
              <PropCell>
                {typeof v === 'boolean' ? <Check id={`p${i}`} defaultChecked={v} /> : (
                  <SelectWrap $pad={4}>
                    <Select id={`p${i}`}><option>{v}</option></Select>
                    <DropZone><Arrow c="#000" /></DropZone>
                  </SelectWrap>
                )}
              </PropCell>
            </PropRow>
          ))}
        </Grid>
        <PropScroll>
          <Chevron d={UP} />
          <ScrollTrack $from={3}><ScrollThumb $size={435} /></ScrollTrack>
          <Chevron d={DOWN} />
        </PropScroll>
      </Scroller>
    </Left>
  );
}

function Tools() {
  return (
    <ToolBar>
      <Grip /><Tool><Floppy /></Tool><Tool><Printer /></Tool><Tool $on><PanelIcon /></Tool><Tool><Expand /></Tool><Tool><PlayFilm /></Tool><Sep $end />
      <Grip /><Tool><Zoomer sign pen /></Tool><DropTool><Arrow c="#000" /></DropTool><Tool><Zoomer /></Tool>
      <ZoomWrap><select aria-label="Zoom"><option>81%</option></select><Arrow c="#000" /></ZoomWrap>
      <Tool><Zoomer sign /></Tool><Sep /><Tool><FitPage /></Tool><Tool $on><FitWidth /></Tool><Sep $end />
      <Grip /><Tool $on><Thumbs /></Tool><Sep />
      <Tool><NavBall d="M5 4.500v7M10.500 4.500v7L6.500 8z" /></Tool>
      <Tool><NavBall d="M9.500 4.500v7L5.500 8z" /></Tool>
      <ToolText as="label" htmlFor="page">Seite</ToolText><ToolInput id="page" defaultValue="2" /><ToolText>von 6</ToolText>
      <Tool><NavBall d="M6.500 4.500v7l4-3.500z" /></Tool>
      <Tool><NavBall d="M11 4.500v7M5.500 4.500v7l4-3.500z" /></Tool><Sep />
      <Tool><NavBall d="M8 4 4 8l4 4v-2.500h4v-3H8z" /></Tool><DropTool><Arrow c="#000" /></DropTool>
      <Tool><NavBall off d="m8 4 4 4-4 4V9.500H4v-3h4z" /></Tool><DropTool><Arrow c="#999" /></DropTool><Sep $end />
      <Grip />{[1, 2, 3, 4].map((k) => <Tool key={k}><Pages k={k} /></Tool>)}<Sep $end />
      <Grip /><Tool $on><Hand /></Tool><Tool><SelText /></Tool><Tool><Bino /></Tool><Sep />
      <ToolText as="label" htmlFor="start">Startseite :&nbsp;</ToolText><ToolInput $box id="start" defaultValue="1" /><Sep />
      <PlainButton><ToolText>Seitenlayout</ToolText></PlainButton><Sep $end />
    </ToolBar>
  );
}

function Contents() {
  return (
    <Side>
      <SideTabs><SideTab>Seiten</SideTab><SideTab $active>Inhalt</SideTab></SideTabs>
      <SidePane>
        <TreeBox>
          {TREE.map(([name, kids], i) => {
            const last = i === TREE.length - 1;
            return (
              <React.Fragment key={name}>
                <TreeRow>
                  <Guide up={i > 0} down={!last} right box={kids.length ? '-' : null} />
                  <TreeLabel><Check defaultChecked />{name}</TreeLabel>
                </TreeRow>
                {kids.map((k, j) => (
                  <TreeRow key={k}>
                    <Guide up={!last} down={!last} />
                    <Guide up down={j < kids.length - 1} right />
                    <TreeLabel><Check defaultChecked />{k}</TreeLabel>
                  </TreeRow>
                ))}
              </React.Fragment>
            );
          })}
        </TreeBox>
      </SidePane>
    </Side>
  );
}

const Sym = ({ s }) => <>{s[0]}<Sub>{s[1]}</Sub></>;

function Document() {
  return (
    <Page>
      <Diagram />
      <DocTitle $top={1} $c="#333">Material</DocTitle>
      <DocTitle $lh={18}>Materialwerte Holz</DocTitle>
      <Formulas>
        <span>Nadelholz C24 gemäß EN 338:2016</span><span><Sym s={['E', '0,mean']} /></span><Eq>=</Eq><span>11000</span><Unit>N/mm²</Unit>
        <span><Sym s={['ρ', 'k']} /></span><Eq>=</Eq><span>350</span><Unit>kg/m³</Unit>
        <span /><span><Sym s={['G', 'mean']} /></span><Eq>=</Eq><span>690</span><Unit>N/mm²</Unit>
      </Formulas>
      <DocTitle $top={6}>Materialkennwerte</DocTitle>
      <DocTable>
        <colgroup>{COLS.map((c, i) => <col key={i} width={c[0]} />)}</colgroup>
        <thead><tr>{COLS.map((c, i) => <th key={i} scope="col"><div><Sym s={c[1]} /></div><div><Sym s={c[2]} /></div><div>{c[3]}</div></th>)}</tr></thead>
        <tbody><tr>{COLS.map((c, i) => <td key={i}><div>{c[4]}</div><div>{c[5]}</div></td>)}</tr></tbody>
      </DocTable>
    </Page>
  );
}

export default function App() {
  return (
    <Window>
      <Global />
      <TitleBar>
        <QuickAccess>
          <Dx />
          <QuickButton $w={32} aria-label="Neu"><Svg w={12} h={16}><path d="M1.500 1.500h6l3 3v10h-9zM7.500 1.500v3h3" stroke="#fff" strokeWidth="1.300" /></Svg></QuickButton>
          <QuickButton $w={16} aria-label="Speichern"><Svg w={16}><path d="M1.500 1.500h13v13h-11l-2-2zM4.500 2v4h7V2M9.500 2v2.500M3.500 8.500h9M4 10.500h8M4 12.500h8" stroke="#fff" /></Svg></QuickButton>
          <QuickButton $w={26} aria-label="Word"><Svg w={16}><path d="M4 1h12v4H4z" fill="#41a5ee" /><path d="M4 5h12v3.500H4z" fill="#2b7cd3" /><path d="M4 8.500h12V12H4z" fill="#185abd" /><path d="M4 12h12v3H4z" fill="#103f91" /><path d="M0 1h4v14H0z" fill="#1fa79a" /><path d="M0 4h10v9H0z" fill="#185abd" /><path d="m1.500 6 1.500 5L5 6.500 7 11l1.500-5" stroke="#fff" strokeWidth="1.200" /></Svg></QuickButton>
          <QuickButton $w={18} aria-label="Anpassen"><Svg w={6} h={7}><path d="M0 .500h6" stroke="#fff" /><path d="M0 3h6L3 6.500z" fill="#fff" /></Svg></QuickButton>
        </QuickAccess>
        <Title>Dach-GK-G (Projekt: Beispiele Holzbau) - Dach+ Berechnung von Dächern (x64) 02/22 (prerelease64)</Title>
        <WindowButtons>
          <WindowButton aria-label="Minimieren"><Svg w={10}><path d="M0 5.500h10" stroke="#fff" /></Svg></WindowButton>
          <WindowButton aria-label="Maximieren"><Svg w={10}><path d="M.500 .500h9v9h-9z" stroke="#fff" /></Svg></WindowButton>
          <WindowButton aria-label="Schließen"><Svg w={10}><path d="m0 0 10 10M10 0 0 10" stroke="#fff" /></Svg></WindowButton>
        </WindowButtons>
      </TitleBar>
      <TabRow>
        <RibbonTab>Datei</RibbonTab><RibbonTab $active>Start</RibbonTab><RibbonTab>Ergebnisse</RibbonTab>
        <Help>
          <Orb />
          <PlainButton><Svg w={16}><circle cx="8" cy="8" r="7.300" stroke="#555" fill="#fff" /><path d="M5.800 6.200c0-3 4.600-2.800 4.500-.200 0 1.600-2.200 1.700-2.200 3.600M8 11v1.600" stroke="#333" strokeWidth="1.500" /></Svg>Hilfe <Arrow /></PlainButton>
        </Help>
      </TabRow>
      <RibbonBar />
      <Body>
        <Properties />
        <Work>
          <TabStrip $h={23}><DocTab>Grafik</DocTab><DocTab $active>Dokument</DocTab></TabStrip>
          <Tools />
          <Middle>
            <Contents />
            <View>
              <TopRuler><HRuler /></TopRuler>
              <SideRuler><VRuler /></SideRuler>
              <Canvas><Document /></Canvas>
              <VScroll>
                <Chevron d={UP} />
                <ScrollTrack $from={117}><ScrollThumb $size={57} /></ScrollTrack>
                <Chevron d={DOWN} />
              </VScroll>
              <HScroll $h><Chevron d="M7 1 3 5l4 4" c="#bbb" /><Chevron d="m3 1 4 4-4 4" c="#bbb" /></HScroll>
            </View>
          </Middle>
          <Lower><Svg w={10}><path d="M8 1h2M8 5h2M4 5h2M8 9h2M4 9h2M0 9h2" stroke="#999" strokeWidth="2" /></Svg></Lower>
          <TabStrip $h={24}>
            {['Auflager infolge Pfetten', 'Zusätzliche Auflager', 'Standard-Lastfälle', 'Zusatz-Lastfälle'].map((t, i) => (
              <DocTab key={t} $h={21} $icon $active={i === 0}><Sheet />{t}</DocTab>
            ))}
            <CloseTab aria-label="Schließen"><Svg w={8}><path d="m1 1 6 6M7 1 1 7" stroke="#111" strokeWidth="1.600" /></Svg></CloseTab>
          </TabStrip>
        </Work>
      </Body>
      <Status />
    </Window>
  );
}
